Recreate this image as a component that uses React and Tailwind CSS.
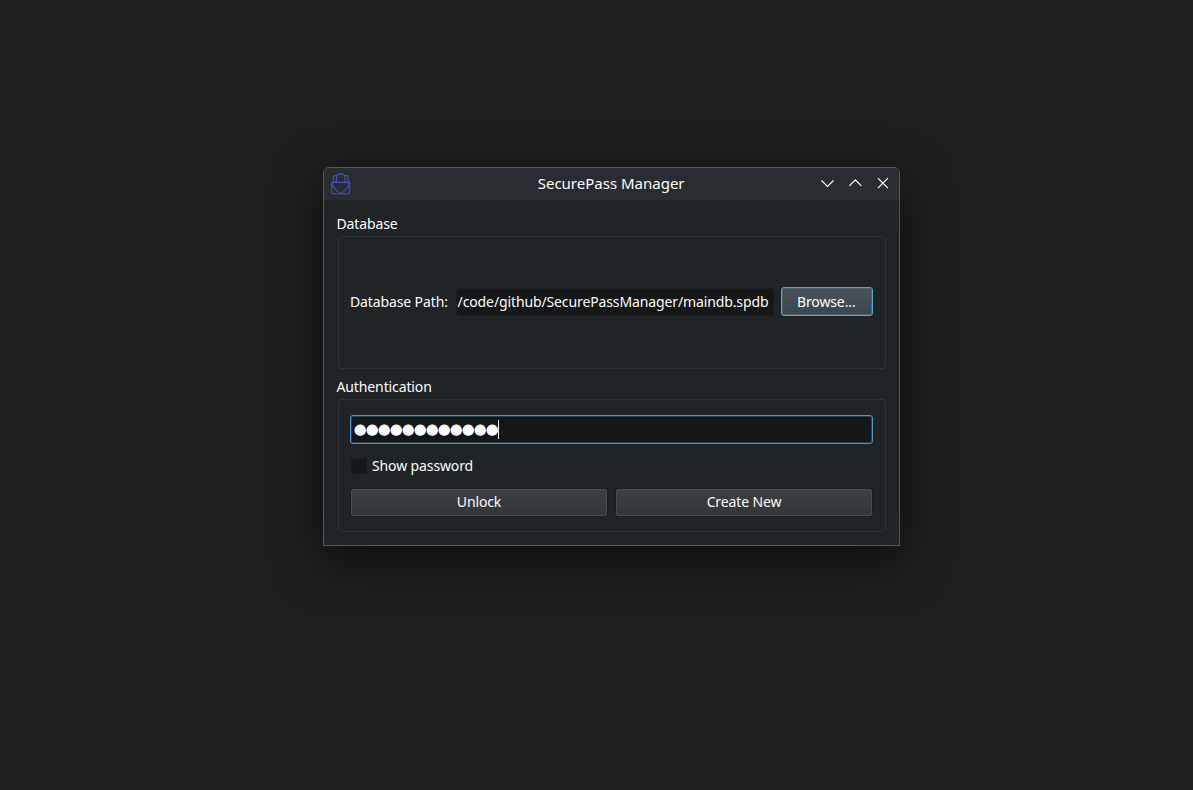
function LogoIcon() {
  return (
    <svg width="20" height="22" viewBox="0 0 20 22" fill="none" stroke="#4a4fc0" strokeWidth="1.1" strokeLinejoin="round" className="mt-[5px] ml-[7px] shrink-0">
      <path d="M0.7 9.4h18v9.4a2 2 0 0 1-2 2H2.7a2 2 0 0 1-2-2z" />
      <path d="M2.4 9.4V3L5.6 2.4M17 9.4V3L13.8 2.4" />
      <path d="M5.4 9.4V4.2C5.4 3 5.8 2 7 1.4L9.7 0.6L12.4 1.4C13.6 2 14 3 14 4.2V9.4" />
      <path d="M1 9.5C1.4 14.5 5.2 17.8 9.7 20.6C14.2 17.8 18 14.5 18.4 9.5" />
    </svg>
  );
}

function WindowButton({ d }) {
  return (
    <button className="h-[14px] w-[14px]">
      <svg width="14" height="14" viewBox="0 0 14 14" fill="none" stroke="#fcfcfc" strokeWidth="1.2">
        <path d={d} />
      </svg>
    </button>
  );
}

function TitleBar() {
  return (
    <div className="flex h-8 rounded-t-[5px] bg-[#292c30]">
      <LogoIcon />
      <div className="ml-[87px] flex-1 pl-[99.7px] text-[15px] leading-[31px]">SecurePass Manager</div>
      <div className="mt-[9px] mr-[9px] flex gap-[14px]">
        <WindowButton d="M1.5 3.5L7.5 9.5L13.5 3.5" />
        <WindowButton d="M1.3 8.9L7.3 2.9L13.3 8.9" />
        <WindowButton d="M1.9 1.2L11.9 11.2M11.9 1.2L1.9 11.2" />
      </div>
    </div>
  );
}

function Group({ title, children }) {
  return (
    <section>
      <h2 className="h-6 pl-[0.5px] leading-6">{title}</h2>
      <div className="ml-[2px] h-[133px] w-[548px] rounded-[3px] border border-[#2e3235] px-3">{children}</div>
    </section>
  );
}

function PushButton({ children }) {
  return (
    <button className="h-[27px] flex-1 rounded-[2px] border border-[#4a4d50] bg-linear-to-b from-[#3d4043] to-[#333639] pb-[2px] leading-[23px] shadow-[0_0_0_1px_#1c1f21]">
      {children}
    </button>
  );
}

export default function App() {
  return (
    <main className="flex h-screen w-screen items-start justify-start overflow-hidden bg-[#1f1f1f] pt-[167px] pl-[323px] font-['Noto_Sans',sans-serif] text-[14px] text-[#fcfcfc]">
      <div className="h-[379px] w-[577px] shrink-0 rounded-t-[6px] border border-[#56595c] bg-[#202427] shadow-[0_14px_50px_rgba(0,0,0,0.65)]">
        <TitleBar />
        <div className="flex flex-col gap-[6px] pt-3 pl-3 tracking-[-0.12px]">
          <Group title="Database">
            <div className="flex h-[129px] items-center">
              <label className="-ml-px w-[106px] shrink-0 whitespace-nowrap">Database Path:</label>
              <div className="flex h-[28px] w-[318px] items-center justify-end overflow-hidden rounded-[3px] border border-[#1b1e20] bg-[#141618] pr-[4.6px] whitespace-nowrap">
                /code/github/SecurePassManager/maindb.spdb
              </div>
              <button className="ml-[7px] h-[29px] w-[92px] shrink-0 rounded-[3px] border border-[#52a9da] bg-linear-to-b from-[#49525a] to-[#3d454c] pr-[1.5px] shadow-[inset_0_0_0_1px_#4e6370]">
                Browse...
              </button>
            </div>
          </Group>
          <Group title="Authentication">
            <div className="flex flex-col pt-[15px]">
              <div className="-ml-px flex h-[29px] w-[523px] items-center rounded-[3px] border border-[#4a9bc7] bg-[#141618] pl-[2.7px] shadow-[inset_0_0_0_1px_#24404f]">
                <span className="font-['DejaVu_Sans',sans-serif] text-[14.8px] leading-none tracking-[-0.9px]">●●●●●●●●●●●●</span>
                <span className="h-[19px] w-px bg-[#fcfcfc]" />
              </div>
              <label className="mt-3 flex h-5 items-center">
                <span className="mr-[5px] h-4 w-4 rounded-[2px] border border-[#191c1e] bg-[#141618]" />
                <span className="pb-px">Show password</span>
              </label>
              <div className="mt-[13px] flex w-[521px] gap-[9px]">
                <PushButton>Unlock</PushButton>
                <PushButton>Create New</PushButton>
              </div>
            </div>
          </Group>
        </div>
      </div>
    </main>
  );
}
